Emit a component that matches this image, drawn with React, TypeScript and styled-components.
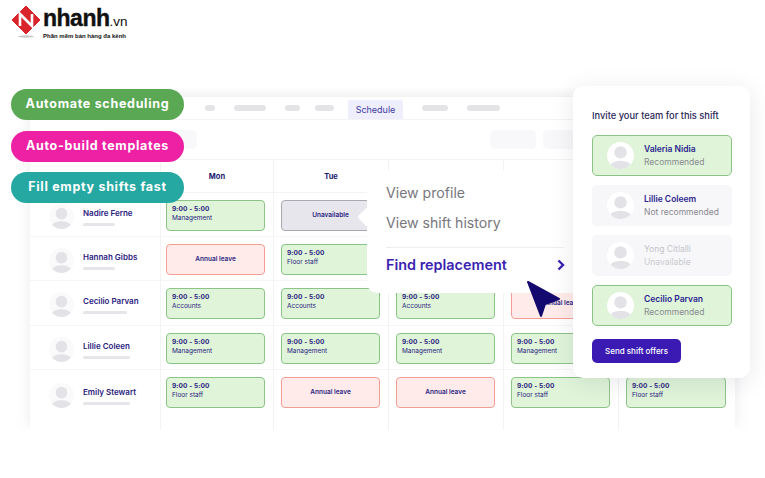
import React from "react";
import styled, { createGlobalStyle } from "styled-components";

const Global = createGlobalStyle`
  html, body { margin: 0; padding: 0; background: #fff; }
  body { width: 765px; height: 478px; overflow: hidden; font-family: Inter, "Liberation Sans", sans-serif; }
`;

const Page = styled.div`
  position: relative;
  width: 765px;
  height: 478px;
  overflow: hidden;
  background: #fff;
`;

const Logo = styled.div`
  display: flex;
  align-items: flex-start;
  gap: 1px;
  height: 91px;
  padding: 5px 0 0 12px;
  box-sizing: border-box;
`;
const LogoText = styled.div`
  display: flex;
  flex-direction: column;
  color: #111;
  margin-top: 2px;
`;
const Brand = styled.div`
  font: 700 23px/22px "Liberation Sans", sans-serif;
  letter-spacing: -0.5px;
  -webkit-text-stroke: 0.4px #111;
  white-space: nowrap;
`;
const BrandSuffix = styled.span`
  font-weight: 400;
  font-size: 13.5px;
  letter-spacing: 0;
  -webkit-text-stroke: 0;
`;
const Tagline = styled.div`
  font: 700 6px/7px "Liberation Sans", sans-serif;
  white-space: nowrap;
  margin-top: 0;
`;

const Board = styled.div`
  width: 705px;
  height: 333px;
  margin: 6px 0 0 30px;
  box-shadow: -6px 0 14px rgba(40, 40, 70, 0.03), 0 -4px 10px rgba(40, 40, 70, 0.03), 6px 0 14px rgba(40, 40, 70, 0.03);
  clip-path: inset(-20px -20px 0 -20px);
  display: flex;
  flex-direction: column;
  background: #fff;
`;
const Nav = styled.div`
  height: 23px;
  display: flex;
  align-items: flex-end;
  padding-left: 175px;
  border-bottom: 1px solid #f3f3f6;
  box-sizing: border-box;
`;
const NavBar = styled.div<{ $w: number; $gap: number }>`
  width: ${(p) => p.$w}px;
  height: 6px;
  margin: 0 ${(p) => p.$gap}px 8px 0;
  border-radius: 3px;
  background: #e4e4e7;
`;
const NavTab = styled.div`
  width: 55px;
  height: 19px;
  margin-right: 19px;
  background: #eeeefc;
  color: #3f3aa0;
  font-size: 9px;
  line-height: 19px;
  text-align: center;
  border-radius: 2px 2px 0 0;
`;
const Tools = styled.div`
  height: 40px;
  display: flex;
  align-items: center;
  padding: 0 0 0 70px;
  gap: 7px;
  border-bottom: 1px solid #f3f3f6;
  box-sizing: border-box;
`;
const ToolBlock = styled.div<{ $w: number; $push?: boolean }>`
  width: ${(p) => p.$w}px;
  height: 19px;
  border-radius: 5px;
  background: #f8f8fa;
  margin-left: ${(p) => (p.$push ? "286px" : "0")};
`;

const Grid = styled.div`
  display: grid;
  grid-template-columns: 130px 113px 115px 115px 115px 117px;
  grid-template-rows: 33px 44px 44px 45px 44px 60px;
`;
const HeadCell = styled.div`
  display: flex;
  align-items: center;
  justify-content: center;
  font: 700 7.5px/1 Inter, sans-serif;
  color: #20186f;
  border-left: 1px solid #f3f3f6;
  border-bottom: 1px solid #f3f3f6;
  padding-top: 1px;
  box-sizing: border-box;
`;
const NameCell = styled.div<{ $last?: boolean }>`
  display: flex;
  align-items: flex-start;
  padding: ${(p) => (p.$last ? "13px" : "11px")} 0 0 19px;
  gap: 9px;
  border-bottom: ${(p) => (p.$last ? "0" : "1px solid #f5f5f7")};
  box-sizing: border-box;
`;
const PersonText = styled.div`
  display: flex;
  flex-direction: column;
  gap: 5px;
  margin-top: 4px;
`;
const PersonName = styled.div`
  font: 600 8px/10px Inter, sans-serif;
  color: #2b2280;
  white-space: nowrap;
`;
const Line = styled.div<{ $w: number }>`
  width: ${(p) => p.$w}px;
  height: 3px;
  border-radius: 2px;
  background: #e6e6ea;
`;
const ShiftCell = styled.div<{ $last?: boolean; $first?: boolean }>`
  display: flex;
  align-items: flex-start;
  padding: 7px 0 0 ${(p) => (p.$first ? "5px" : "7px")};
  border-left: 1px solid #f3f3f6;
  border-bottom: ${(p) => (p.$last ? "0" : "1px solid #f5f5f7")};
  box-sizing: border-box;
`;
const kinds = {
  shift: { bg: "#dff4d9", bd: "#8cc487" },
  leave: { bg: "#ffecea", bd: "#f49d92" },
  off: { bg: "#e6e6ec", bd: "#a9a9b3" },
};
const Shift = styled.div<{ $kind: keyof typeof kinds; $wide?: boolean }>`
  width: ${(p) => (p.$wide ? 100 : 99)}px;
  height: 31px;
  box-sizing: border-box;
  border-radius: 4px;
  border: 1px solid ${(p) => kinds[p.$kind].bd};
  background: ${(p) => kinds[p.$kind].bg};
  padding: 4px 5px;
  color: #2b2280;
  font: 400 6.5px/9px Inter, sans-serif;
  display: flex;
  flex-direction: column;
  justify-content: ${(p) => (p.$kind === "shift" ? "flex-start" : "center")};
  align-items: ${(p) => (p.$kind === "shift" ? "flex-start" : "center")};
  font-weight: ${(p) => (p.$kind === "shift" ? 400 : 600)};
`;
const ShiftTime = styled.div`
  font-weight: 700;
  letter-spacing: 0.1px;
`;

const Pills = styled.div`
  position: absolute;
  left: 11px;
  top: 89px;
  display: flex;
  flex-direction: column;
  gap: 10.5px;
`;
const Pill = styled.div<{ $bg: string }>`
  width: 173px;
  height: 31px;
  border-radius: 16px;
  background: ${(p) => p.$bg};
  color: #fff;
  display: flex;
  align-items: center;
  justify-content: center;
  font: 700 12.5px/1 Inter, sans-serif;
  letter-spacing: 0.7px;
  white-space: nowrap;
`;

const Menu = styled.div`
  position: absolute;
  left: 367px;
  top: 171px;
  width: 215px;
  height: 122px;
  background: #fff;
  border-radius: 10px;
  padding: 7px 19px 0;
  box-sizing: border-box;
  display: flex;
  flex-direction: column;
  &::before {
    content: "";
    position: absolute;
    left: -7px;
    top: 39px;
    width: 14px;
    height: 14px;
    background: #fff;
    transform: rotate(45deg);
    border-radius: 2px;
  }
`;
const MenuItem = styled.div`
  font: 400 14.1px/20px Inter, sans-serif;
  color: #77777d;
  height: 30px;
  display: flex;
  align-items: center;
`;
const MenuRule = styled.div`
  width: 178px;
  height: 1px;
  background: #eeeef0;
  margin-top: 9px;
`;
const MenuAction = styled.div`
  width: 180px;
  margin-top: 6px;
  height: 22px;
  display: flex;
  align-items: center;
  justify-content: space-between;
  font: 600 14.4px/20px Inter, sans-serif;
  color: #3a1fb0;
`;

const Panel = styled.div`
  position: absolute;
  left: 573px;
  top: 86px;
  width: 177px;
  height: 292px;
  border-radius: 10px;
  background: #fff;
  box-shadow: 0 4px 24px rgba(40, 40, 70, 0.1);
  padding: 23px 18px 0 19px;
  box-sizing: border-box;
  display: flex;
  flex-direction: column;
`;
const PanelTitle = styled.div`
  font: 500 9.3px/13px Inter, sans-serif;
  color: #2c2858;
  margin-bottom: 13px;
  white-space: nowrap;
`;
const Cards = styled.div`
  display: flex;
  flex-direction: column;
  gap: 9px;
`;
const Card = styled.div<{ $on?: boolean }>`
  height: 41px;
  box-sizing: border-box;
  border-radius: 5px;
  border: 1px solid ${(p) => (p.$on ? "#8cc487" : "#f7f7f9")};
  background: ${(p) => (p.$on ? "#dff4d9" : "#f7f7f9")};
  display: flex;
  align-items: center;
  padding-left: 14px;
  gap: 10px;
`;
const CardText = styled.div`
  display: flex;
  flex-direction: column;
  gap: 2px;
  padding-top: 1px;
`;
const CardName = styled.div<{ $dim?: boolean }>`
  font: ${(p) => (p.$dim ? 400 : 600)} 8.5px/11px Inter, sans-serif;
  color: ${(p) => (p.$dim ? "#c4c4ca" : "#2b1f8f")};
`;
const CardNote = styled.div<{ $dim?: boolean }>`
  font: 400 8.5px/11px Inter, sans-serif;
  color: ${(p) => (p.$dim ? "#c9c9ce" : "#8a8a90")};
`;
const SendButton = styled.div`
  width: 89px;
  height: 24px;
  margin-top: 13px;
  border-radius: 5px;
  background: #3b1ab4;
  color: #fff;
  font: 500 8px/24px Inter, sans-serif;
  text-align: center;
`;
const Cursor = styled.svg`
  position: absolute;
  left: 524px;
  top: 279px;
`;

const Avatar = ({ size = 25, bg = "#fafafb" }: { size?: number; bg?: string }) => (
  <svg width={size} height={size} viewBox="0 0 26 26" style={{ flex: "none" }}>
    <defs>
      <clipPath id="avatar-clip">
        <circle cx="13" cy="13" r="13" />
      </clipPath>
    </defs>
    <circle cx="13" cy="13" r="13" fill={bg} />
    <g clipPath="url(#avatar-clip)" fill="#e2e2e7">
      <circle cx="13" cy="10" r="6" />
      <ellipse cx="13" cy="23" rx="10" ry="5" />
    </g>
  </svg>
);

type S = { k: "shift"; role: string } | { k: "leave" } | { k: "off" } | null;
const sh = (role: string): S => ({ k: "shift", role });
const lv: S = { k: "leave" };
const rows: { name: string; w: number; cells: S[] }[] = [
  { name: "Nadire Ferne", w: 32, cells: [sh("Management"), { k: "off" }, null, null, null] },
  { name: "Hannah Gibbs", w: 32, cells: [lv, sh("Floor staff"), null, null, null] },
  { name: "Cecilio Parvan", w: 44, cells: [sh("Accounts"), sh("Accounts"), sh("Accounts"), lv, null] },
  { name: "Lillie Coleen", w: 47, cells: [sh("Management"), sh("Management"), sh("Management"), sh("Management"), null] },
  { name: "Emily Stewart", w: 47, cells: [sh("Floor staff"), lv, lv, sh("Floor staff"), sh("Floor staff")] },
];
const days = ["Mon", "Tue", "Wed", "Thu", "Fri"];

export default function App() {
  return (
    <Page>
      <Global />
      <Logo>
        <svg width="30" height="33" viewBox="0 0 30 33">
          <path d="M14 1 L28 15 L14 29 L0 15 Z" fill="#d9242b" strokeLinejoin="round" stroke="#d9242b" />
          <path d="M8 21 V9 L20 21 V9" fill="none" stroke="#fff" strokeWidth="2.6" />
          <ellipse cx="14" cy="31.5" rx="8" ry="1.2" fill="#c8c8c8" />
        </svg>
        <LogoText>
          <Brand>
            nhanh<BrandSuffix>.vn</BrandSuffix>
          </Brand>
          <Tagline>Phần mềm bán hàng đa kênh</Tagline>
        </LogoText>
      </Logo>
      <Board>
        <Nav>
          <NavBar $w={10} $gap={19} />
          <NavBar $w={32} $gap={19} />
          <NavBar $w={15} $gap={15} />
          <NavBar $w={19} $gap={14} />
          <NavTab>Schedule</NavTab>
          <NavBar $w={26} $gap={19} />
          <NavBar $w={33} $gap={0} />
        </Nav>
        <Tools>
          <ToolBlock $w={97} />
          <ToolBlock $w={46} $push />
          <ToolBlock $w={46} />
        </Tools>
        <Grid>
          <div />
          {days.map((d) => (
            <HeadCell key={d}>{d}</HeadCell>
          ))}
          {rows.map((r, i) => (
            <React.Fragment key={r.name}>
              <NameCell $last={i === 4}>
                <Avatar />
                <PersonText>
                  <PersonName>{r.name}</PersonName>
                  <Line $w={r.w} />
                </PersonText>
              </NameCell>
              {r.cells.map((c, j) => (
                <ShiftCell key={j} $last={i === 4} $first={j === 0}>
                  {c && (
                    <Shift $kind={c.k} $wide={j === 4}>
                      {c.k === "shift" ? (
                        <>
                          <ShiftTime>9:00 - 5:00</ShiftTime>
                          <div>{c.role}</div>
                        </>
                      ) : c.k === "leave" ? (
                        "Annual leave"
                      ) : (
                        "Unavailable"
                      )}
                    </Shift>
                  )}
                </ShiftCell>
              ))}
            </React.Fragment>
          ))}
        </Grid>
      </Board>

      <Pills>
        <Pill $bg="#5aa854">Automate scheduling</Pill>
        <Pill $bg="#ee20a4">Auto-build templates</Pill>
        <Pill $bg="#26a8a2">Fill empty shifts fast</Pill>
      </Pills>

      <Menu>
        <MenuItem>View profile</MenuItem>
        <MenuItem>View shift history</MenuItem>
        <MenuRule />
        <MenuAction>
          Find replacement
          <svg width="10" height="12" viewBox="0 0 10 12">
            <path d="M2.5 1.5 L7 6 L2.5 10.5" fill="none" stroke="#3a1fb0" strokeWidth="2.4" />
          </svg>
        </MenuAction>
      </Menu>

      <Panel>
        <PanelTitle>Invite your team for this shift</PanelTitle>
        <Cards>
          <Card $on>
            <Avatar size={27} bg="#fff" />
            <CardText>
              <CardName>Valeria Nidia</CardName>
              <CardNote>Recommended</CardNote>
            </CardText>
          </Card>
          <Card>
            <Avatar size={27} bg="#fff" />
            <CardText>
              <CardName>Lillie Coleem</CardName>
              <CardNote>Not recommended</CardNote>
            </CardText>
          </Card>
          <Card>
            <Avatar size={27} bg="#fff" />
            <CardText>
              <CardName $dim>Yong Citlalli</CardName>
              <CardNote $dim>Unavailable</CardNote>
            </CardText>
          </Card>
          <Card $on>
            <Avatar size={27} bg="#fff" />
            <CardText>
              <CardName>Cecilio Parvan</CardName>
              <CardNote>Recommended</CardNote>
            </CardText>
          </Card>
        </Cards>
        <SendButton>Send shift offers</SendButton>
      </Panel>

      <Cursor width="40" height="42" viewBox="0 0 40 42">
        <path d="M4 3 L35 20 L21 25 L17 37 Z" fill="#14096e" stroke="#14096e" strokeWidth="2" strokeLinejoin="round" />
      </Cursor>
    </Page>
  );
}
